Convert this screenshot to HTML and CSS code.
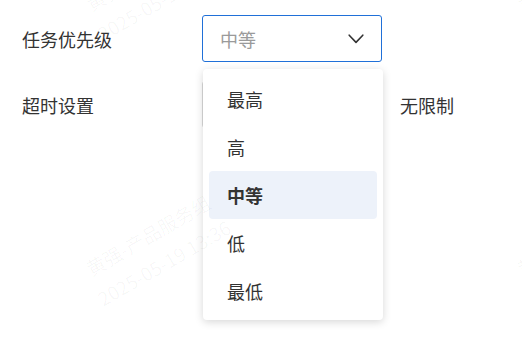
FILE: index.html
```html
<!DOCTYPE html>
<html lang="zh-CN">
<head>
<meta charset="utf-8">
<title>任务设置</title>
<link rel="stylesheet" href="styles.css">
</head>
<body>
<div class="form">
  <div class="row">
    <div class="label">任务优先级</div>
    <div class="select-wrap">
      <div class="select">
        <span class="placeholder">中等</span>
        <svg class="chevron" width="16" height="10" viewBox="0 0 16 10"><path d="M1.2 1.2 L8 8.4 L14.8 1.2" fill="none" stroke="#333" stroke-width="1.6" stroke-linecap="round" stroke-linejoin="round"/></svg>
      </div>
      <ul class="dropdown">
        <li class="item">最高</li>
        <li class="item">高</li>
        <li class="item active">中等</li>
        <li class="item">低</li>
        <li class="item">最低</li>
      </ul>
    </div>
  </div>
  <div class="row">
    <div class="label">超时设置</div>
    <div class="input"></div>
    <div class="suffix">无限制</div>
  </div>
</div>
<div class="watermarks">
  <div class="wm wm-a"><div>黄强-产品服务组</div><div>2025-05-19 13:36</div></div>
  <div class="wm wm-b"><div>黄强-产品服务组</div><div>2025-05-19 13:36</div></div>
  <div class="wm wm-c"><div>黄强-产品服务组</div><div>2025-05-19 13:36</div></div>
  <div class="wm wm-d"><div>黄强-产品服务组</div><div>2025-05-19 13:36</div></div>
</div>
</body>
</html>
```
FILE: styles.css
```css
html, body {
  margin: 0;
  padding: 0;
  background: #fff;
  width: 522px;
  height: 343px;
  overflow: hidden;
  position: relative;
  font-family: "Noto Sans CJK SC", "Noto Sans", sans-serif;
  color: #333;
  font-size: 18px;
}
.form {
  padding: 15px 0 0 22px;
  display: flex;
  flex-direction: column;
  gap: 19px;
}
.row {
  display: flex;
  align-items: center;
  height: 47px;
}
.label {
  width: 180px;
  line-height: 24px;
}
.select-wrap {
  position: relative;
  width: 180px;
  height: 47px;
}
.select {
  box-sizing: border-box;
  height: 47px;
  border: 1px solid #2070d8;
  border-radius: 3px;
  display: flex;
  align-items: center;
  justify-content: space-between;
  padding: 0 17px 0 17px;
}
.placeholder {
  color: #9a9a9a;
}
.chevron {
  display: block;
}
.input {
  box-sizing: border-box;
  width: 180px;
  height: 47px;
  border: 1px solid #d9d9d9;
  border-radius: 3px;
}
.suffix {
  margin-left: 18px;
}
.dropdown {
  position: absolute;
  top: 54px;
  left: 1px;
  width: 180px;
  box-sizing: border-box;
  margin: 0;
  padding: 6px 6px 5px 6px;
  list-style: none;
  background: #fff;
  border-radius: 4px;
  box-shadow: 0 2px 9px rgba(0, 0, 0, 0.16);
  z-index: 2;
}
.item {
  height: 48px;
  display: flex;
  align-items: center;
  padding-left: 18px;
  border-radius: 4px;
  color: #333;
}
.item.active {
  background: #edf2fa;
  font-weight: 700;
}
.watermarks {
  position: absolute;
  inset: 0;
  pointer-events: none;
  z-index: 5;
}
.wm {
  position: absolute;
  width: 200px;
  margin-left: -100px;
  margin-top: -28px;
  text-align: center;
  font-size: 19px;
  line-height: 32px;
  color: rgba(0, 0, 0, 0.035);
  transform: rotate(-30deg);
  white-space: nowrap;
}
.wm-a { left: 156px; top: -20px; }
.wm-b { left: 156px; top: 245px; }
.wm-c { left: 587px; top: -20px; }
.wm-d { left: 587px; top: 245px; }
```
